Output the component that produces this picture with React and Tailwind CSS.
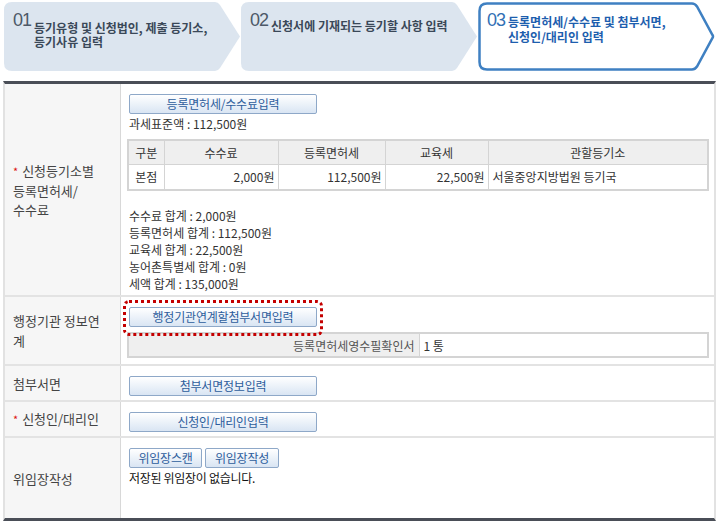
import React from "react";

const steps = [
  { num: "01", lines: ["등기유형 및 신청법인, 제출 등기소,", "등기사유 입력"], top: "mt-[10px]" },
  { num: "02", lines: ["신청서에 기재되는 등기할 사항 입력"], top: "mt-[8px]" },
  { num: "03", lines: ["등록면허세/수수료 및 첨부서면,", "신청인/대리인 입력"], top: "mt-[3px]", active: true },
];

const Step = ({ num, lines, top, active }) => (
  <div className="relative w-[237px] h-[69px] shrink-0">
    <svg className="absolute inset-0" width="237" height="69" viewBox="0 0 237 69">
      {active ? (
        <path
          d="M9 1.5 H214 Q217 1.5 219 4.5 L234.5 33 Q235.5 34.5 234.5 36 L219 64.5 Q217 67.5 214 67.5 H9 Q1.5 67.5 1.5 60 V9 Q1.5 1.5 9 1.5 Z"
          fill="#fff"
          stroke="#3f80c2"
          strokeWidth="2.5"
        />
      ) : (
        <path
          d="M8 0 H211 Q214 0 216 3 L236 34.5 L216 66 Q214 69 211 69 H8 Q0 69 0 61 V8 Q0 0 8 0 Z"
          fill="#dce5ef"
        />
      )}
    </svg>
    <div className="relative flex pl-[9px] pt-[9px]">
      <span
        className={`font-['Liberation_Sans',sans-serif] text-[18px] leading-[18px] font-light tracking-[-1px] ${
          active ? "text-[#3270b5]" : "text-[#4d5968]"
        }`}
      >
        {num}
      </span>
      <div
        className={`${top} ml-[3px] text-[12px] ${active ? "leading-[15px]" : "leading-[14px]"} font-bold ${
          active ? "text-[#1d5eae]" : "text-[#3a4858]"
        }`}
      >
        {lines.map((l) => (
          <div key={l}>{l}</div>
        ))}
      </div>
    </div>
  </div>
);

const Btn = ({ children, className = "" }) => (
  <button
    className={`h-[20px] ml-[2px] border border-[#8ea8c8] rounded-[2px] bg-linear-to-b from-white to-[#d9e5f3] text-[#2d5d9c] text-[12px] leading-none tracking-[-0.2px] ${className}`}
  >
    {children}
  </button>
);

const Star = () => <span className="text-[#d11] text-[11px] mr-[4px]">*</span>;

const Row = ({ label, h, children, last }) => (
  <div className={`flex ${h} ${last ? "" : "border-b-2 border-[#e3e3e3]"}`}>
    <div className="w-[116px] shrink-0 bg-[#f6f6f6] border-r border-[#d8d8d8] flex items-center pl-[8px] text-[13px] leading-[19px] text-[#444]">
      <div>{label}</div>
    </div>
    <div className="relative flex-1 pl-[6px] pt-[10px] text-[12px] leading-[17px] text-[#333]">
      {children}
    </div>
  </div>
);

export default function App() {
  return (
    <div className="w-[720px] h-[524px] bg-white font-['Noto_Sans_CJK_KR','Noto_Sans',sans-serif] overflow-hidden">
      <div className="flex h-[81px] pt-[2px] pl-[4px]">
        {steps.map((s) => (
          <Step key={s.num} {...s} />
        ))}
      </div>

      <div className="ml-[3px] w-[713px] border-x-2 border-x-[#e2e2e2] border-t-[3px] border-t-[#4a4e57] border-b-[3px] border-b-[#4a4e57]">
        <Row
          h="h-[213px]"
          label={
            <>
              <Star />
              신청등기소별
              <br />
              등록면허세/
              <br />
              수수료
            </>
          }
        >
          <Btn className="w-[188px]">등록면허세/수수료입력</Btn>
          <div className="ml-[2px] mt-[1px] leading-[18px]">과세표준액 : 112,500원</div>
          <table className="mt-[6px] w-[582px] border-collapse border-2 border-[#d4d4d4] text-[12px]">
            <thead>
              <tr className="h-[24px] bg-[#efefef]">
                <th className="w-[36px] border border-[#d4d4d4] font-normal">구분</th>
                <th className="w-[114px] border border-[#d4d4d4] font-normal">수수료</th>
                <th className="w-[107px] border border-[#d4d4d4] font-normal">등록면허세</th>
                <th className="w-[103px] border border-[#d4d4d4] font-normal">교육세</th>
                <th className="border border-[#d4d4d4] font-normal">관할등기소</th>
              </tr>
            </thead>
            <tbody>
              <tr className="h-[26px]">
                <td className="border border-[#d4d4d4] text-center">본점</td>
                <td className="border border-[#d4d4d4] text-right pr-[3px]">2,000원</td>
                <td className="border border-[#d4d4d4] text-right pr-[3px]">112,500원</td>
                <td className="border border-[#d4d4d4] text-right pr-[3px]">22,500원</td>
                <td className="border border-[#d4d4d4] pl-[4px]">서울중앙지방법원 등기국</td>
              </tr>
            </tbody>
          </table>
          <div className="ml-[2px] mt-[16px]">
            <div>수수료 합계 : 2,000원</div>
            <div>등록면허세 합계 : 112,500원</div>
            <div>교육세 합계 : 22,500원</div>
            <div>농어촌특별세 합계 : 0원</div>
            <div>세액 합계 : 135,000원</div>
          </div>
        </Row>

        <Row
          h="h-[69px]"
          label={
            <div className="leading-[20px]">
              행정기관 정보연
              <br />계
            </div>
          }
        >
          <Btn className="w-[188px]">행정기관연계할첨부서면입력</Btn>
          <div className="absolute left-[2px] top-[3px] w-[200px] h-[36px] border-[3px] border-dotted border-[#c40000] rounded-[6px]" />
          <table className="mt-[5px] w-[582px] border-collapse border-2 border-[#d4d4d4] text-[12px]">
            <tbody>
              <tr className="h-[24px]">
                <td className="w-[291px] bg-[#efefef] border border-[#d4d4d4] text-right pr-[4px] text-[#555]">
                  등록면허세영수필확인서
                </td>
                <td className="border border-[#d4d4d4] pl-[4px]">1 통</td>
              </tr>
            </tbody>
          </table>
        </Row>

        <Row h="h-[36px]" label="첨부서면">
          <Btn className="w-[188px]">첨부서면정보입력</Btn>
        </Row>

        <Row
          h="h-[36px]"
          label={
            <>
              <Star />
              신청인/대리인
            </>
          }
        >
          <Btn className="w-[188px]">신청인/대리인입력</Btn>
        </Row>

        <Row h="h-[80px]" label="위임장작성" last>
          <div className="flex gap-[1px]">
            <Btn className="w-[73px]">위임장스캔</Btn>
            <Btn className="w-[74px]">위임장작성</Btn>
          </div>
          <div className="ml-[2px] mt-[1px] text-[#111] tracking-[-0.3px]">저장된 위임장이 없습니다.</div>
        </Row>
      </div>
    </div>
  );
}
